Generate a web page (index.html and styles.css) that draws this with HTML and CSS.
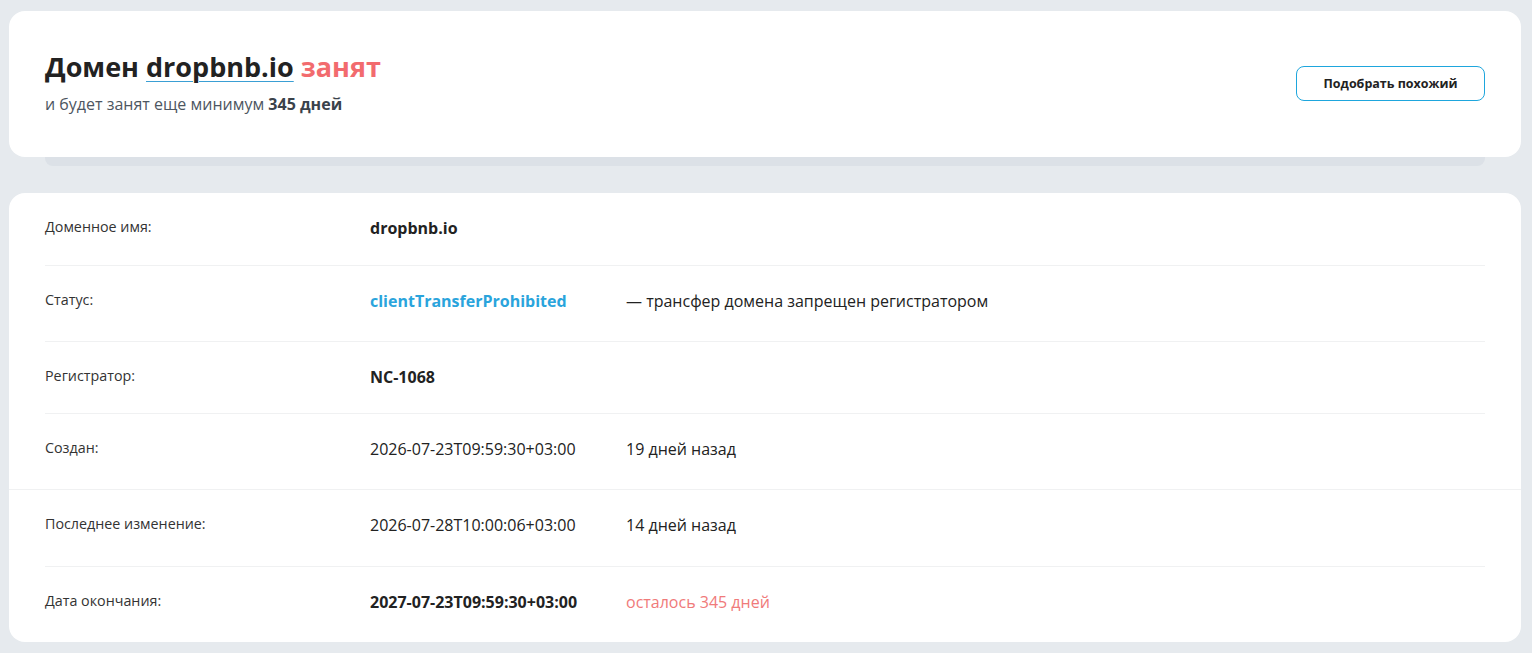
FILE: index.html
```html
<!DOCTYPE html>
<html lang="ru">
<head>
<meta charset="utf-8">
<title>dropbnb.io — Whois</title>
<link rel="stylesheet" href="styles.css">
</head>
<body>
<main class="page">
  <section class="summary">
    <div class="summary-card">
      <div class="summary-text">
        <h1 class="headline">Домен <span class="domain">dropbnb.io</span> <span class="busy">занят</span></h1>
        <p class="subline">и будет занят еще минимум <b>345 дней</b></p>
      </div>
      <button class="btn-outline" type="button">Подобрать похожий</button>
    </div>
    <div class="summary-shelf"></div>
  </section>

  <section class="whois-card">
    <div class="row row-short">
      <div class="label">Доменное имя:</div>
      <div class="value strong">dropbnb.io</div>
    </div>
    <div class="row">
      <div class="label">Статус:</div>
      <div class="value strong link">clientTransferProhibited</div>
      <div class="note">— трансфер домена запрещен регистратором</div>
    </div>
    <div class="row row-short">
      <div class="label">Регистратор:</div>
      <div class="value strong">NC-1068</div>
    </div>
    <div class="row">
      <div class="label">Создан:</div>
      <div class="value">2026-07-23T09:59:30+03:00</div>
      <div class="note">19 дней назад</div>
    </div>
    <div class="row row-wide">
      <div class="label">Последнее изменение:</div>
      <div class="value">2026-07-28T10:00:06+03:00</div>
      <div class="note">14 дней назад</div>
    </div>
    <div class="row">
      <div class="label">Дата окончания:</div>
      <div class="value strong">2027-07-23T09:59:30+03:00</div>
      <div class="note warn">осталось 345 дней</div>
    </div>
  </section>
</main>
</body>
</html>
```

FILE: styles.css
```css
* {
  box-sizing: border-box;
}

html, body {
  margin: 0;
  padding: 0;
}

body {
  background: #e6eaee;
  font-family: "Open Sans", "Noto Sans", sans-serif;
  color: #222;
}

.page {
  padding: 11px 11px 0 9px;
}

/* top summary */
.summary-card {
  height: 146px;
  background: #fff;
  border-radius: 16px;
  padding: 0 36px;
  display: flex;
  align-items: center;
  justify-content: space-between;
}

.summary-text {
  align-self: flex-start;
  padding-top: 38px;
}

.summary-shelf {
  height: 9px;
  margin: 0 36px;
  background: #dce1e7;
  border-radius: 0 0 8px 8px;
}

.headline {
  margin: 0;
  font-size: 27px;
  font-weight: 700;
  line-height: 36px;
  color: #222;
}

.domain {
  text-decoration: underline;
  text-decoration-color: #3a9fd4;
  text-decoration-thickness: 1px;
  text-underline-offset: 4px;
}

.busy {
  color: #f26b6e;
}

.subline {
  margin: 8px 0 0;
  font-size: 16px;
  line-height: 22px;
  color: #4d5661;
}

.subline b {
  color: #3a424b;
}

.btn-outline {
  width: 189px;
  height: 35px;
  margin-top: -1px;
  border: 1px solid #1ea6dd;
  border-radius: 8px;
  background: #fff;
  font-family: inherit;
  font-size: 12.5px;
  font-weight: 700;
  color: #222;
  cursor: pointer;
}

/* whois table */
.whois-card {
  margin-top: 27px;
  background: #fff;
  border-radius: 16px;
  height: 449px;
}

.row {
  display: flex;
  align-items: flex-start;
  margin: 0 36px;
  height: 76px;
  padding-top: 24px;
  border-top: 1px solid #f0f1f2;
  line-height: 22px;
}

.row-short {
  height: 72px;
}

.row:first-child {
  border-top: 0;
}

.row-wide {
  margin: 0;
  padding-left: 36px;
  padding-right: 36px;
  height: 77px;
}

.label {
  width: 325px;
  flex: none;
  font-size: 14.3px;
  color: #333;
  margin-top: -1px;
}

.value {
  width: 256px;
  flex: none;
  font-size: 16px;
  color: #222;
}

.strong {
  font-weight: 700;
}

.link {
  color: #2aa4dc;
}

.note {
  font-size: 16px;
  color: #222;
}

.warn {
  color: #f07a7a;
}
```
